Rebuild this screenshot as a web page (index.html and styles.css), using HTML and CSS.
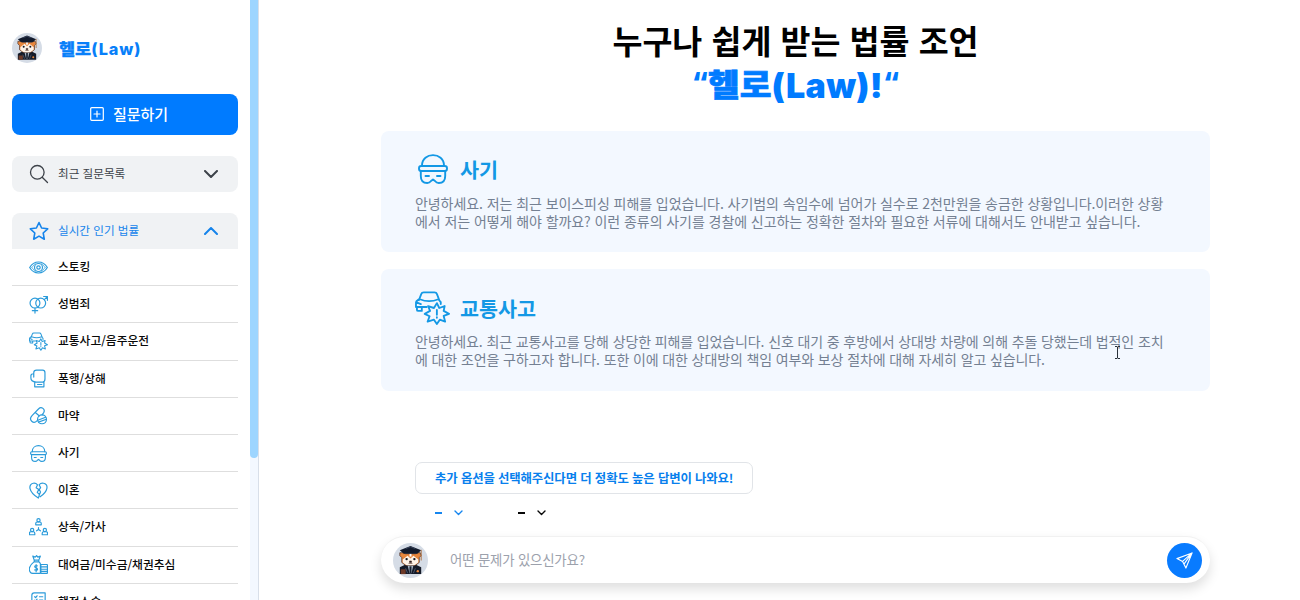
FILE: index.html
```html
<!DOCTYPE html>
<html lang="ko">
<head>
<meta charset="utf-8">
<title>헬로(Law)</title>
<link rel="stylesheet" href="styles.css">
</head>
<body>
<svg class="sprite" aria-hidden="true">
  <symbol id="avatar" viewBox="0 0 36 36">
    <circle cx="18" cy="18" r="18" fill="#d5dce6"/>
    <path d="M7 32V25L13 22H23L29 25V32Z" fill="#141a28"/>
    <path d="M15 23H21L19 31H17Z" fill="#aab5c5"/>
    <path d="M17 24H19V31H17Z" fill="#17202f"/>
    <path d="M7 10H11L13 11H23L25 10H28L29 13L27 15V20L23 23H13L9 20V15L7 13Z" fill="#e7863d" stroke="#3b2522" stroke-width=".7"/>
    <path d="M10 17L15 13L18 16L21 13L26 17V20L22 23H14L10 20Z" fill="#fff4e9"/>
    <path d="M17 11H19V14H17Z" fill="#fff"/>
    <circle cx="14" cy="16.5" r="1.2" fill="#141722"/><circle cx="22" cy="16.5" r="1.2" fill="#141722"/>
    <path d="M17 18.5H19V20H17ZM16 21H20" fill="#171923" stroke="#593a31" stroke-width=".7"/>
    <path d="M18 3L29 7.5L25 11H11L7 7.5Z" fill="#121a2c"/>
    <path d="M13 5.8L18 4L23 5.8" fill="none" stroke="#48556f" stroke-width=".7"/>
    <path d="M29 7V18" stroke="#ac7447"/>
    <path d="M8 27H13V32H8Z" fill="#6d3927"/><path d="M13 26L15 31M23 26L21 31" stroke="#5e6c84" stroke-width=".7"/>
    <circle cx="25.5" cy="29" r="1.2" fill="#e7863d"/>
  </symbol>
  <symbol id="search" viewBox="0 0 20 20"><circle cx="8.3" cy="8.3" r="6.8"/><path d="M13.2 13.2L18.5 18.5"/></symbol>
  <symbol id="star" viewBox="0 0 20 20"><path d="M10 1.5L12.6 7L18.7 7.8L14.2 12L15.3 18.2L10 15.1L4.7 18.2L5.8 12L1.3 7.8L7.4 7Z"/></symbol>
  <symbol id="eye" viewBox="0 0 20 20"><path d="M.7 10C5.2 2.3 14.8 2.3 19.3 10C14.8 17.7 5.2 17.7 .7 10Z"/><path d="M3 10L7 5.2M17 10L13 5.2M3 10L7 14.8M17 10L13 14.8" stroke-width=".7"/><circle cx="10" cy="10" r="4.2"/><circle cx="10" cy="10" r="1.8"/></symbol>
  <symbol id="gender" viewBox="0 0 20 20"><circle cx="6.3" cy="8.5" r="5.2"/><circle cx="12.3" cy="8.5" r="5.2"/><path d="M6.3 13.7V19M3.5 16.5H9.1M16.1 4.9L19.2 1.8M15.4 1.6H19.4V5.6"/></symbol>
  <symbol id="crash" viewBox="0 0 36 34"><path d="M4 9L6.5 2.5Q7 1 9 1H20Q22 1 22.5 2.5L25 9M5 8Q14.5 12 24 8M4 8L1.5 10Q1 11 1 13V16H12M1 11L6 13M24 8L26.5 11V13M2 16V19Q2 20 3.5 20H7V16"/><path d="M22.5 12L25 17L30.5 15L29.5 20L35 23L29.5 25.2L31 31L25.5 29L22.5 33.5L19.5 29L13 31L15 25.5L10 23L15.5 20L13.5 15L19.5 17Z"/><path d="M22.5 19V24M22.5 26.5V27"/></symbol>
  <symbol id="glove" viewBox="0 0 20 20"><path d="M5 8.5V4Q5 1.2 8 1.2H14.3Q16.8 1.2 16.8 4V10.5Q16.8 13.3 14.5 13.8H7.5Q1.8 13.2 2 9.5V7Q2.2 5 5 5M6 14V18.8H15.7V13.5M9 16.3H13.5"/></symbol>
  <symbol id="pills" viewBox="0 0 20 20"><path d="M3.2 10.2L10.2 2.9C13-.3 17.7 3.6 15.3 7.2L13.8 9.3M3.2 10.2C-1 14.8 4.8 19.4 8.3 15.7M6.6 6.8L11 10.5"/><circle cx="13.7" cy="14" r="4.7"/><path d="M9.3 15L17.5 11.8M10 17L18.3 14"/></symbol>
  <symbol id="burglar" viewBox="0 0 30 30"><path d="M4 12V11.5C4-2.3 26-2.3 26 11.5V12"/><rect x="1" y="12" width="28" height="5" rx="2.3"/><path d="M2.8 17V22Q2.8 29 9.2 29Q11.5 29 13 27L15 25.5L17 27Q18.5 29 20.8 29Q27.2 29 27.2 22V17M7.5 22H11M19 22H22.5"/></symbol>
  <symbol id="heart" viewBox="0 0 20 20"><path d="M9.8 18C-1 11.3-.8 3.5 4.4 2.4Q7 1.8 9 4L7.5 7L10.3 9L8.7 12L11 14.4L9.8 18ZM11 14.3L12.1 11.5L10.8 9L12.2 7L10.6 4Q12.5 1.8 15.3 2.4C20.7 3.5 20.5 10.8 11.7 16.6"/></symbol>
  <symbol id="family" viewBox="0 0 20 20"><circle cx="10" cy="2.4" r="1.7"/><path d="M7.1 7.2V5.7Q7.1 4.2 8.6 4.2H11.4Q12.9 4.2 12.9 5.7V7.2ZM10 10V12L8 13.5M10 12L12 13.5"/><circle cx="3.3" cy="12.7" r="1.7"/><path d="M.5 17.6V16Q.5 14.5 2 14.5H4.6Q6.1 14.5 6.1 16V17.6Z"/><circle cx="16.7" cy="12.7" r="1.7"/><path d="M13.9 17.6V16Q13.9 14.5 15.4 14.5H18Q19.5 14.5 19.5 16V17.6Z"/></symbol>
  <symbol id="money" viewBox="0 0 20 20"><path d="M5.5 5.4L4 1.2L6.5 2.2L8 .6L9.3 2.2L12 1.2L10.3 5.4ZM5.5 5.4V7C-.5 11.7-.6 16 1.7 18.5Q2.2 19.3 4 19.3H12V9.3Q11.5 7.8 10.3 7V5.4M5.5 7.2H10.3M8.7 11.5Q6 10.7 6 12.2Q6 13.3 7.5 13.5Q9 14 9 15.2Q8.5 16.7 6 15.7M7.5 10V17.5"/><rect x="12.5" y="10" width="6.9" height="9.3" rx=".5"/><path d="M12.5 12.5H19.4M12.5 15H19.4M12.5 17.2H19.4"/></symbol>
  <symbol id="document" viewBox="0 0 20 20"><path d="M3 3.5V19H17V1H5.5Q3 1 3 3.5ZM6 5L7 6L8.5 4M11 5H14.5M6 8.5L7 9.5L8.5 7.5M11 8.5H14.5M1 16H3"/></symbol>
</svg>
<div class="app">
  <aside class="sidebar">
    <div class="sidebar-content">
      <header class="brand"><svg><use href="#avatar"/></svg><strong><span class="brand-ko">헬로</span><span class="brand-en">(Law)</span></strong></header>
      <button class="ask"><svg class="line" viewBox="0 0 14 14"><rect x=".7" y=".7" width="12.6" height="12.6" rx="1"/><path d="M7 4V10M4 7H10"/></svg><span>질문하기</span></button>
      <div class="group recent"><svg class="line"><use href="#search"/></svg><span>최근 질문목록</span><svg class="line chevron" viewBox="0 0 14 8"><path d="M1 1L7 7L13 1"/></svg></div>
      <div class="group popular"><svg class="line"><use href="#star"/></svg><span>실시간 인기 법률</span><svg class="line chevron" viewBox="0 0 14 8"><path d="M1 7L7 1L13 7"/></svg></div>
      <nav>
        <a><svg class="line"><use href="#eye"/></svg><span>스토킹</span></a>
        <a><svg class="line"><use href="#gender"/></svg><span>성범죄</span></a>
        <a><svg class="line crash"><use href="#crash"/></svg><span>교통사고/음주운전</span></a>
        <a><svg class="line"><use href="#glove"/></svg><span>폭행/상해</span></a>
        <a><svg class="line"><use href="#pills"/></svg><span>마약</span></a>
        <a><svg class="line burglar"><use href="#burglar"/></svg><span>사기</span></a>
        <a><svg class="line"><use href="#heart"/></svg><span>이혼</span></a>
        <a><svg class="line"><use href="#family"/></svg><span>상속/가사</span></a>
        <a><svg class="line"><use href="#money"/></svg><span>대여금/미수금/채권추심</span></a>
        <a><svg class="line"><use href="#document"/></svg><span>행정소송</span></a>
      </nav>
    </div>
    <div class="scrollbar"><div class="thumb"></div></div>
  </aside>
  <main>
    <h1>누구나 쉽게 받는 법률 조언</h1>
    <p class="slogan"><span class="quote">“</span><span class="slogan-ko">헬로</span><span class="latin">(Law)!</span><span class="quote">“</span></p>
    <section class="cards">
      <article><h2><svg class="line thief"><use href="#burglar"/></svg>사기</h2><p>안녕하세요. 저는 최근 보이스피싱 피해를 입었습니다. 사기범의 속임수에 넘어가 실수로 2천만원을 송금한 상황입니다.이러한 상황<br>에서 저는 어떻게 해야 할까요? 이런 종류의 사기를 경찰에 신고하는 정확한 절차와 필요한 서류에 대해서도 안내받고 싶습니다.</p></article>
      <article><h2><svg class="line accident"><use href="#crash"/></svg>교통사고</h2><p>안녕하세요. 최근 교통사고를 당해 상당한 피해를 입었습니다. 신호 대기 중 후방에서 상대방 차량에 의해 추돌 당했는데 법적인 조치<br>에 대한 조언을 구하고자 합니다. 또한 이에 대한 상대방의 책임 여부와 보상 절차에 대해 자세히 알고 싶습니다.</p></article>
    </section>
    <div class="hint">추가 옵션을 선택해주신다면 더 정확도 높은 답변이 나와요!</div>
    <div class="options"><div class="option active"><i></i><svg class="line" viewBox="0 0 9 6"><path d="M1 1L4.5 4.5L8 1"/></svg></div><div class="option"><i></i><svg class="line" viewBox="0 0 9 6"><path d="M1 1L4.5 4.5L8 1"/></svg></div></div>
    <div class="composer"><svg class="portrait"><use href="#avatar"/></svg><span>어떤 문제가 있으신가요?</span><button class="send"><svg class="line" viewBox="0 0 18 18"><path d="M17 1L1 7L7 10L10.5 17L17 1ZM17 1L7 10M17 1L9 12"/></svg></button></div>
  </main>
</div>
<svg class="cursor" viewBox="0 0 7 13"><path d="M1 .5H3L3.5 1L4 .5H6M3.5 1V12M1 12.5H3L3.5 12L4 12.5H6"/></svg>
</body>
</html>
```
FILE: styles.css
```css
* { box-sizing: border-box; }
body { margin: 0; overflow: hidden; background: #fff; font-family: "Noto Sans CJK KR", sans-serif; color: #080808; }
.sprite { position: absolute; width: 0; height: 0; }
button { border: 0; font-family: inherit; }
.line { fill: none; stroke: currentColor; stroke-linecap: round; stroke-linejoin: round; }
.app { display: flex; height: 600px; overflow: hidden; }
.sidebar { width: 259px; flex: none; display: flex; border-right: 1px solid #d8dfe9; }
.sidebar-content { width: 250px; padding: 33px 12px 0; }
.brand { height: 30px; display: flex; align-items: center; gap: 17px; color: #087ff9; }
.brand > svg { width: 30px; height: 30px; }
.brand strong { display: flex; align-items: center; height: 30px; line-height: 30px; font-weight: 900; font-size: 17.5px; margin-top: 2px; -webkit-text-stroke: .3px currentColor; }
.brand-ko { transform: scaleY(.88); }
.brand-en { font-family: Inter, sans-serif; font-weight: 800; font-size: 16.3px; letter-spacing: .9px; -webkit-text-stroke: 0; }
.ask { width: 226px; height: 41px; margin-top: 31px; border-radius: 8px; background: #007bff; color: #fff; display: flex; align-items: center; justify-content: center; gap: 9px; padding: 0 0 3px 8px; font-size: 15px; font-weight: 500; }
.ask svg { width: 14px; height: 14px; stroke-width: 1.2; margin-top: 1px; }
.group { width: 226px; height: 36px; display: flex; align-items: center; background: #f0f2f4; padding-left: 17px; font-size: 11.6px; color: #3d4249; margin-top: 21px; border-radius: 8px; }
.group span, nav span { padding-bottom: 3px; }
.group > svg:first-child { width: 20px; height: 20px; margin-right: 9px; stroke-width: 1.3; }
.group .chevron { width: 14px; height: 8px; margin: 0 20px 0 auto; stroke-width: 2; }
.popular { border-radius: 8px 8px 0 0; color: #1684eb; }
.group.popular > svg:first-child { stroke-width: 1.6; }
nav a { height: 37.2px; border-bottom: 1px solid #dedede; display: flex; align-items: center; gap: 10px; padding-left: 17px; font-size: 11.75px; font-weight: 500; color: #090909; }
nav svg { color: #2b9bda; width: 19px; height: 19px; stroke-width: 1.25; }
nav .crash { stroke-width: 2; }
nav .burglar { stroke-width: 2; height: 17px; }
.scrollbar { width: 8px; background: #f3f8ff; }
.thumb { height: 458px; background: #9dd5ff; border-radius: 0 0 4px 4px; }
main { width: 829px; margin-left: 122px; padding-top: 18px; flex: none; }
h1 { margin: 0; height: 43px; line-height: 43px; text-align: center; font-size: 32.6px; font-weight: 700; color: #000; }
.slogan { display: flex; justify-content: center; align-items: center; height: 45px; line-height: 45px; margin: 0; font-size: 34.5px; font-weight: 900; color: #007bff; -webkit-text-stroke: .8px currentColor; }
.slogan-ko { transform: scaleY(.88); }
.latin { font-family: Inter, sans-serif; font-size: 34px; padding-top: 3px; letter-spacing: .3px; -webkit-text-stroke: 0; }
.quote { font-family: Inter, sans-serif; font-size: 26px; padding-bottom: 5px; -webkit-text-stroke: 0; }
.cards { display: grid; gap: 17.5px; margin-top: 24.5px; }
article { height: 121.5px; padding: 20px 0 0 34px; background: #f3f8ff; border-radius: 8px; }
article:first-child { height: 121px; }
article:last-child { padding-top: 21px; }
h2 { height: 36px; display: flex; align-items: center; margin: 0; font-size: 20.7px; line-height: 34px; color: #1398e5; }
h2 svg { stroke-width: 1.9; }
.thief { width: 30px; height: 30px; margin: 0 12px 0 3px; }
.accident { width: 35px; height: 34px; margin-right: 10px; }
article p { margin: 7px 0 0; white-space: nowrap; font-size: 14px; letter-spacing: -.07px; line-height: 18px; color: #748092; }
article:last-child p { margin-top: 6px; letter-spacing: -.12px; }
.hint { width: 338px; height: 32px; line-height: 30px; margin: 71px 0 0 34px; border: 1px solid #e1e4e8; border-radius: 7px; padding-left: 19px; white-space: nowrap; font-size: 12.4px; letter-spacing: -.13px; font-weight: 700; color: #087fed; }
.options { display: flex; padding-left: 54px; height: 42px; gap: 55px; }
.option { display: flex; align-items: center; height: 38px; gap: 12px; }
.option i { width: 7px; height: 2px; background: currentColor; }
.option svg { width: 9px; height: 6px; stroke-width: 1.4; }
.active { color: #1686ef; }
.composer { width: 829px; height: 47px; border-top: 1px solid #f1f1f1; border-radius: 24px; background: #fff; box-shadow: 0 6px 12px rgba(0,0,0,.13); display: flex; align-items: center; padding: 1px 8px 0 12px; font-size: 13.4px; letter-spacing: -.17px; color: #9ca1ac; }
.composer > span { padding-bottom: 2px; }
.portrait { width: 35px; height: 35px; margin-right: 22px; }
.send { width: 35px; height: 35px; padding: 0; border-radius: 50%; margin-left: auto; background: #087bff; color: white; display: grid; place-items: center; }
.send svg { width: 17px; height: 17px; stroke-width: 1.2; }
.cursor { position: absolute; left: 1114px; top: 346px; width: 7px; height: 13px; fill: none; stroke: #29313a; stroke-width: 1; }
```
